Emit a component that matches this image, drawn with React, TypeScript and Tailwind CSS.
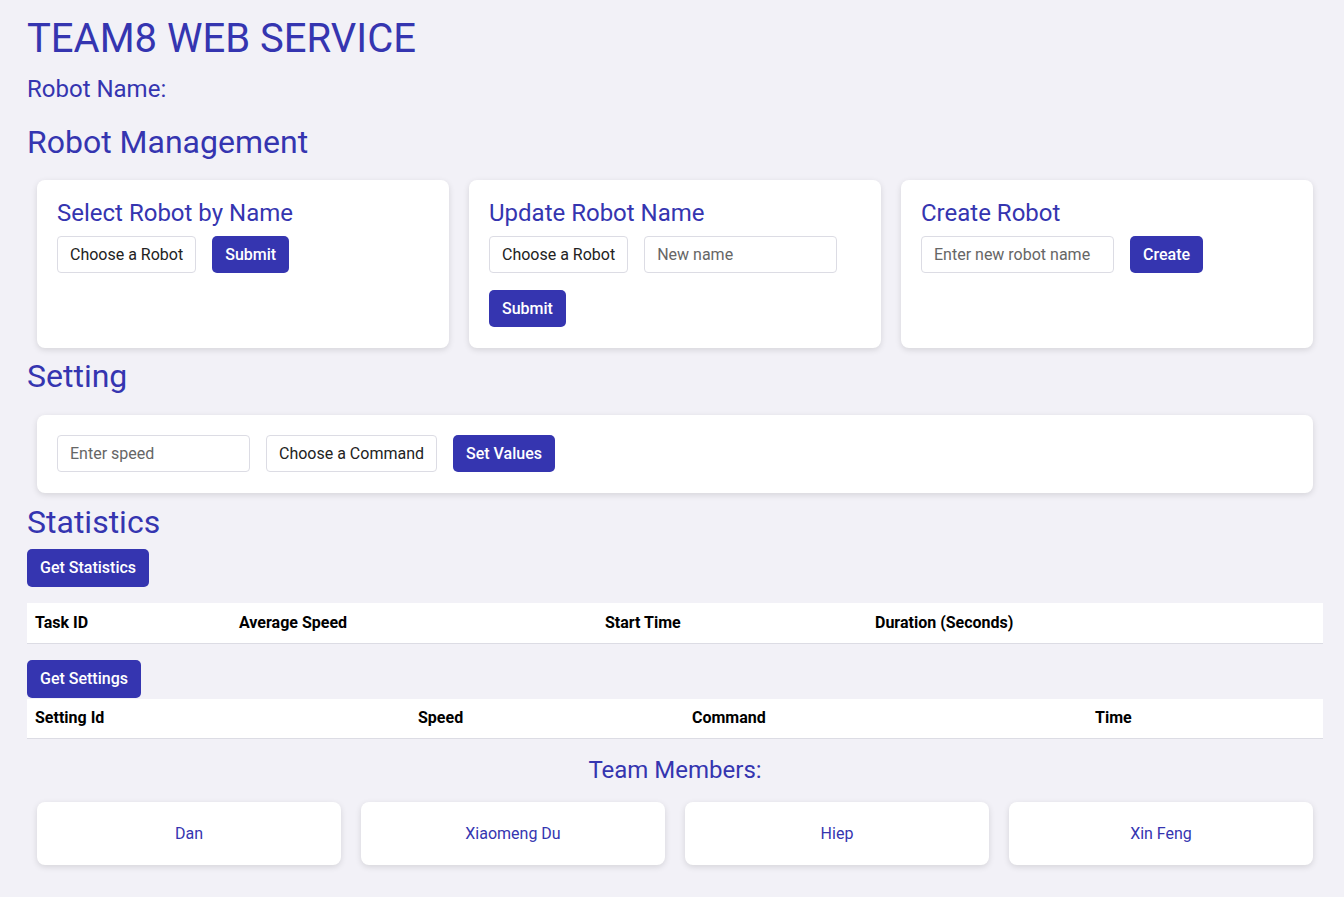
const blue = 'text-[#3535b0]'

function Btn({ label, className = '' }: { label: string; className?: string }) {
  return (
    <button
      type="button"
      className={`flex items-center rounded-[5px] bg-[#3535b0] px-[13px] text-[16px] font-medium text-white ${className}`}
    >
      {label}
    </button>
  )
}

function SelectBox({ label }: { label: string }) {
  return (
    <div className="flex h-[37px] items-center rounded-[4px] border border-[#dcdce4] bg-white px-[12px] text-[16px] text-[#222]">
      {label}
    </div>
  )
}

function TextInput({ placeholder }: { placeholder: string }) {
  return (
    <input
      placeholder={placeholder}
      className="h-[37px] w-[193px] rounded-[4px] border border-[#dcdce4] bg-white px-[12px] text-[16px] text-[#222] outline-none placeholder:text-[#666]"
    />
  )
}

function Card({ title, children }: { title: string; children: React.ReactNode }) {
  return (
    <div className="h-[168px] rounded-[8px] bg-white px-[20px] pt-[21px] shadow-[0_2px_6px_rgba(0,0,0,0.12)]">
      <h3 className={`text-[24px] leading-[24px] ${blue}`}>{title}</h3>
      <div className="mt-[11px] flex flex-wrap gap-x-[16px] gap-y-[17px]">{children}</div>
    </div>
  )
}

const statCols = [
  { label: 'Task ID', w: 'w-[204px]' },
  { label: 'Average Speed', w: 'w-[366px]' },
  { label: 'Start Time', w: 'w-[270px]' },
  { label: 'Duration (Seconds)', w: '' },
]

const settingCols = [
  { label: 'Setting Id', w: 'w-[383px]' },
  { label: 'Speed', w: 'w-[274px]' },
  { label: 'Command', w: 'w-[403px]' },
  { label: 'Time', w: '' },
]

function Table({ cols }: { cols: { label: string; w: string }[] }) {
  return (
    <table className="w-full border-collapse bg-white">
      <thead>
        <tr className="h-[40px] border-b border-[#dcdce4]">
          {cols.map(c => (
            <th key={c.label} className={`px-[8px] text-left text-[16px] font-bold text-black ${c.w}`}>
              {c.label}
            </th>
          ))}
        </tr>
      </thead>
    </table>
  )
}

const members = ['Dan', 'Xiaomeng Du', 'Hiep', 'Xin Feng']

export default function App() {
  return (
    <div className="min-h-[897px] bg-[#f2f1f7] pt-[19px] pr-[21px] pl-[27px] font-['Roboto',sans-serif]">
      <h1 className={`text-[40px] leading-[40px] ${blue}`}>TEAM8 WEB SERVICE</h1>
      <p className={`mt-[18px] text-[24px] leading-[24px] ${blue}`}>Robot Name:</p>

      <h2 className={`mt-[25px] text-[32px] leading-[32px] ${blue}`}>Robot Management</h2>
      <div className="mt-[22px] grid grid-cols-3 gap-[20px] px-[10px]">
        <Card title="Select Robot by Name">
          <SelectBox label="Choose a Robot" />
          <Btn label="Submit" className="h-[37px]" />
        </Card>
        <Card title="Update Robot Name">
          <SelectBox label="Choose a Robot" />
          <TextInput placeholder="New name" />
          <Btn label="Submit" className="h-[37px]" />
        </Card>
        <Card title="Create Robot">
          <TextInput placeholder="Enter new robot name" />
          <Btn label="Create" className="h-[37px]" />
        </Card>
      </div>

      <h2 className={`mt-[12px] text-[32px] leading-[32px] ${blue}`}>Setting</h2>
      <div className="mx-[10px] mt-[23px] flex h-[78px] items-start gap-[16px] rounded-[8px] bg-white px-[20px] pt-[20px] shadow-[0_2px_6px_rgba(0,0,0,0.12)]">
        <TextInput placeholder="Enter speed" />
        <SelectBox label="Choose a Command" />
        <Btn label="Set Values" className="h-[37px]" />
      </div>

      <h2 className={`mt-[13px] text-[32px] leading-[32px] ${blue}`}>Statistics</h2>
      <Btn label="Get Statistics" className="mt-[11px] h-[38px]" />
      <div className="mt-[16px]">
        <Table cols={statCols} />
      </div>

      <Btn label="Get Settings" className="mt-[16px] h-[38px]" />
      <div className="mt-[1px]">
        <Table cols={settingCols} />
      </div>

      <h3 className={`mt-[19px] text-center text-[24px] leading-[24px] ${blue}`}>Team Members:</h3>
      <div className="mt-[20px] grid grid-cols-4 gap-[20px] px-[10px] pb-[32px]">
        {members.map(m => (
          <div
            key={m}
            className={`flex h-[63px] items-center justify-center rounded-[8px] bg-white text-[16px] shadow-[0_2px_6px_rgba(0,0,0,0.12)] ${blue}`}
          >
            {m}
          </div>
        ))}
      </div>
    </div>
  )
}
